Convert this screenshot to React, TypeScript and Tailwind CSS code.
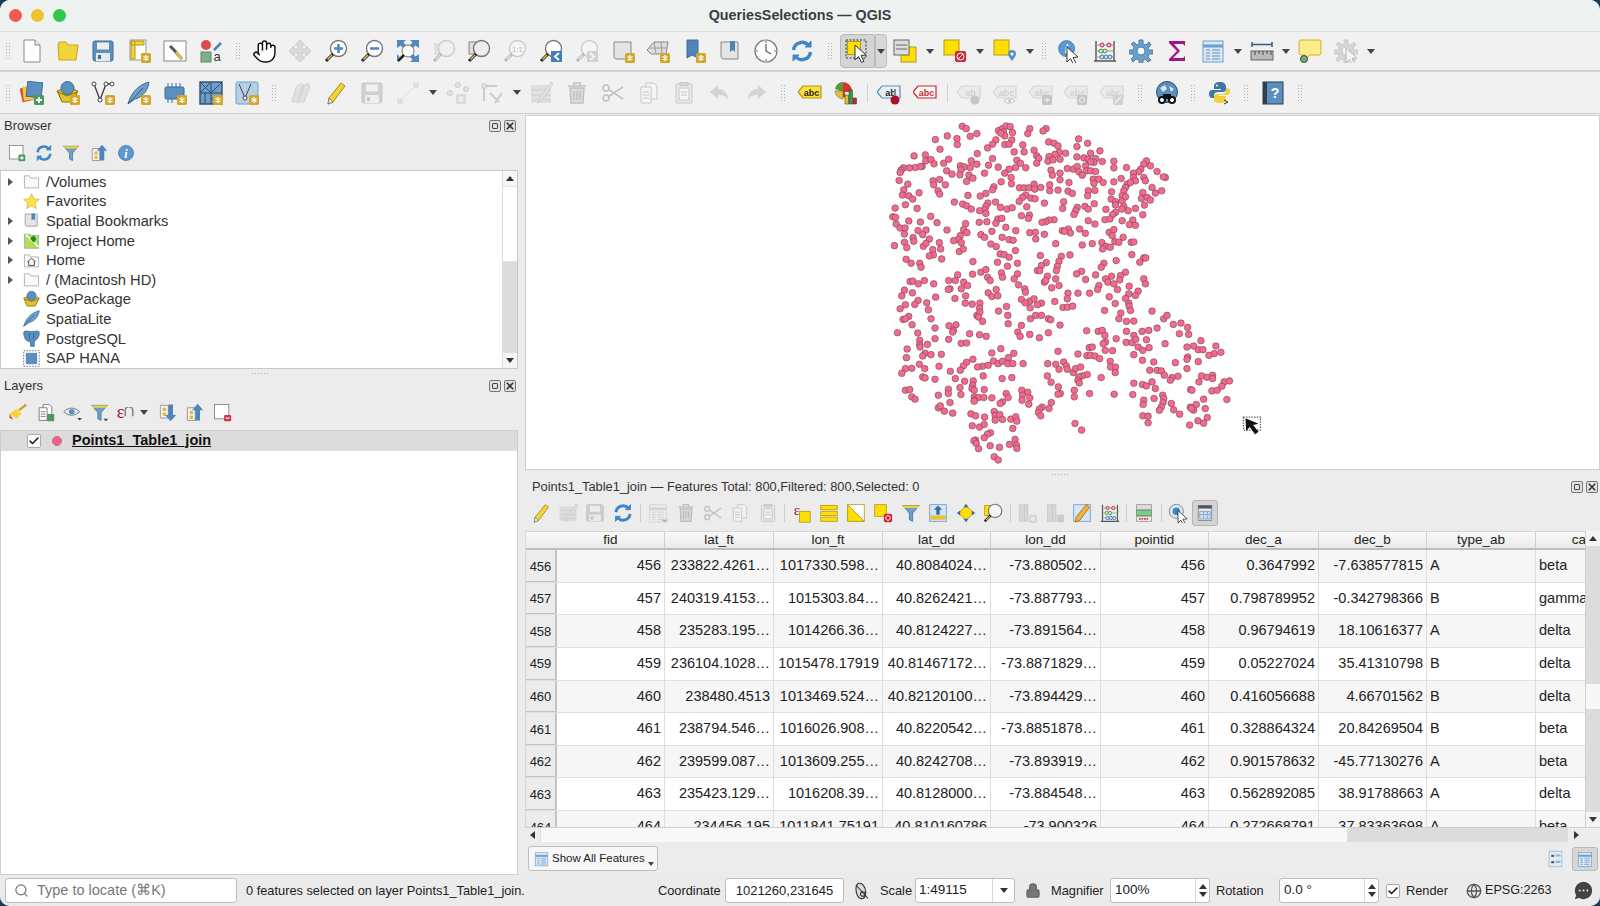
import type { ReactNode } from 'react';
import { Hand, Search, Lock, Globe, MessageCircleMore, Check } from 'lucide-react';

const POINTS =
  '309,31 321,38 264,60 353,53 333,61 228,71 293,68 418,44 430,38 441,30 453,32 433,47 460,50 437,60 425,52 512,38 506,53 561,38 552,45 ' +
  '294,86 242,100 410,72 400,85 385,96 437,86 458,72 450,85 569,78 585,82 597,90 659,69 654,92 686,82 491,87 ' +
  '723,105 695,112 495,108 465,108 525,103 533,120 539,127 533,142 601,109 620,112 588,115 570,122 567,136 582,132 603,130 654,123 675,126 688,130 710,128 705,140 695,138 730,137 765,136 863,135 164,120 198,117 199,135 215,131 224,144 253,142 268,130 354,113 400,128 336,135 473,133 ' +
  '484,142 500,156 469,155 450,160 437,172 417,154 376,172 353,145 388,148 303,150 315,153 333,155 305,162 262,165 278,175 302,177 329,178 188,152 183,152 167,155 150,156 132,156 125,163 122,170 765,156 803,155 855,145 875,150 846,160 840,168 824,172 895,167 576,163 603,172 625,158 643,160 655,152 660,168 680,150 683,165 695,165 710,167 670,178 580,178 ' +
  '341,187 322,197 119,194 145,205 221,195 241,191 258,207 223,207 456,185 457,204 426,198 404,213 703,190 720,190 733,200 705,203 765,198 787,188 824,185 830,195 855,185 860,195 920,185 914,183 805,205 800,215 815,200 630,200 603,192 572,207 481,216 495,216 509,216 525,205 527,220 545,215 572,225 597,223 ' +
  '133,222 129,238 148,240 160,250 179,231 236,225 241,235 326,239 363,241 380,233 400,222 627,226 640,233 708,224 688,225 686,240 758,228 880,215 909,225 890,232 852,230 848,248 865,245 875,253 795,225 790,240 757,250 770,258 790,255 800,243 500,238 490,245 515,247 528,249 480,257 556,262 614,258 ' +
  '285,259 310,265 322,270 336,280 386,262 380,272 376,282 361,285 409,259 424,275 444,280 459,276 503,273 611,278 138,267 107,277 173,278 706,264 678,272 655,275 650,285 645,296 688,280 741,281 795,272 808,285 830,278 857,268 770,268 789,280 770,290 761,297 852,297 ' +
  '100,303 108,305 148,316 183,319 214,302 233,321 380,293 360,320 383,318 416,310 428,308 440,335 410,323 487,300 511,298 508,308 585,312 570,313 560,318 549,320 688,315 708,325 738,312 753,310 790,315 822,313 830,329 812,327 110,325 122,337 137,337 319,324 ' +
  '176,345 200,343 190,357 135,355 161,366 263,343 313,342 323,351 303,360 297,372 283,375 365,357 376,365 398,347 429,365 470,345 512,351 529,350 556,356 530,370 610,345 628,340 634,352 617,347 662,340 679,353 751,350 765,342 760,360 793,365 210,370 163,377 135,380 450,372 462,374 ' +
  '105,390 142,396 192,392 200,383 240,381 244,400 395,385 411,393 590,384 670,388 700,384 729,381 741,392 731,400 754,395 768,378 780,380 817,380 825,379 306,381 300,408 312,400 220,402 469,405 222,418 210,421 ' +
  '140,431 155,443 181,443 185,455 247,430 341,438 415,440 423,415 435,417 450,425 475,443 544,420 607,422 633,418 600,437 595,452 819,417 855,427 861,427 843,440 772,435 735,443 727,455 562,441 547,450 535,465 ' +
  '365,470 380,462 340,476 445,452 427,472 475,475 592,465 542,465 668,467 653,475 710,478 758,482 800,470 785,480 783,493 740,490 680,492 855,490 860,505 556,500 565,482 590,490 430,485 385,485 393,495 465,490 152,498 160,497 195,495 177,505 223,505 268,495 288,495 295,478 313,500 ' +
  '272,520 306,520 325,510 135,524 127,541 159,532 267,522 478,508 497,520 499,530 387,532 411,522 398,543 416,541 578,517 600,510 560,495 627,533 657,533 692,533 720,510 716,522 747,500 765,505 776,522 811,512 838,527 830,540 810,535 ' +
  '319,541 287,549 229,545 176,555 166,567 202,562 138,568 122,580 625,550 512,557 487,552 498,562 525,550 547,563 535,568 513,577 318,563 339,566 362,563 361,578 587,558 751,544 769,564 800,549 810,563 811,572 815,585 612,576 626,575 641,572 737,585 880,587 ' +
  '418,587 442,573 207,583 215,610 148,603 131,612 138,610 446,600 353,600 362,590 358,605 514,610 530,600 547,600 568,610 575,613 786,593 780,610 803,618 825,617 915,610 925,600 895,638 370,618 944,627 967,623 987,636 ' +
  '158,628 227,638 269,631 290,628 282,645 280,650 114,652 175,653 447,625 487,630 476,650 603,629 683,646 718,648 730,645 738,660 803,648 825,660 850,648 870,645 962,655 990,657 ' +
  '331,655 361,658 381,663 483,663 512,657 541,667 568,652 227,670 268,672 181,675 181,688 204,687 306,684 322,683 772,670 740,680 733,685 802,681 820,682 831,672 863,673 919,685 1027,676 1005,692 985,695 1072,692 1019,703 1033,703 143,701 182,695 ' +
  '425,700 398,713 691,697 700,695 739,705 761,706 838,695 852,705 871,697 597,708 657,716 684,721 695,720 708,722 722,730 1087,711 1067,715 1051,720 197,714 215,718 246,717 141,727 190,722 464,714 448,727 825,718 987,725 985,732 851,735 885,740 1019,739 754,738 ' +
  '341,732 322,741 312,752 303,765 273,768 180,747 138,760 157,759 127,774 196,760 239,753 370,753 387,750 403,737 417,745 430,738 446,745 461,745 492,745 355,755 566,745 590,747 600,762 614,740 622,752 625,762 643,772 650,760 665,755 755,755 770,755 769,772 950,742 985,760 873,765 895,765 908,767 917,780 685,778 670,782 660,785 657,795 1029,782 1062,780 ' +
  '190,785 197,788 227,792 372,782 429,790 458,787 288,790 316,798 342,797 340,810 565,782 576,801 661,803 727,787 958,783 940,787 935,795 1045,786 1062,790 1097,800 1113,797 1090,813 1021,800 825,804 851,808 863,812 880,800 890,820 ' +
  '138,825 151,823 237,840 267,822 267,835 302,817 305,838 338,820 345,825 375,823 398,848 345,845 358,847 374,847 441,835 447,847 488,825 506,831 490,840 512,848 598,815 604,835 597,837 646,825 646,845 692,835 766,837 822,838 912,840 915,850 886,850 996,823 1000,825 1060,827 1076,825 1105,853 1035,852 ' +
  '157,845 167,852 272,862 237,878 243,872 255,888 280,894 345,855 345,858 489,855 430,860 423,865 509,867 577,862 570,880 549,876 541,882 538,892 855,855 853,868 913,862 908,875 902,885 938,865 945,884 963,897 1013,868 995,876 1005,885 1040,880 998,880 852,902 868,903 ' +
  '335,896 349,902 376,906 405,889 408,901 422,898 408,915 430,913 455,912 470,905 473,918 545,902 648,925 668,945 868,923 993,930 1018,917 1035,924 1046,907 339,932 361,936 375,928 461,940 394,953 385,957 375,968 349,975 344,977 351,985 393,992 421,997 358,1001 451,988 468,973 472,990 473,1000 405,1025 417,1035';

const ROWS = [
  ['456', '233822.4261…', '1017330.598…', '40.8084024…', '-73.880502…', '456', '0.3647992', '-7.638577815', 'A', 'beta'],
  ['457', '240319.4153…', '1015303.84…', '40.8262421…', '-73.887793…', '457', '0.798789952', '-0.342798366', 'B', 'gamma'],
  ['458', '235283.195…', '1014266.36…', '40.8124227…', '-73.891564…', '458', '0.96794619', '18.10616377', 'A', 'delta'],
  ['459', '236104.1028…', '1015478.17919', '40.81467172…', '-73.8871829…', '459', '0.05227024', '35.41310798', 'B', 'delta'],
  ['460', '238480.4513', '1013469.524…', '40.82120100…', '-73.894429…', '460', '0.416056688', '4.66701562', 'B', 'delta'],
  ['461', '238794.546…', '1016026.908…', '40.8220542…', '-73.8851878…', '461', '0.328864324', '20.84269504', 'B', 'beta'],
  ['462', '239599.087…', '1013609.255…', '40.8242708…', '-73.893919…', '462', '0.901578632', '-45.77130276', 'A', 'beta'],
  ['463', '235423.129…', '1016208.39…', '40.8128000…', '-73.884548…', '463', '0.562892085', '38.91788663', 'A', 'delta'],
  ['464', '234456.195', '1011841.75191', '40.810160786', '-73.900326', '464', '0.272668791', '37.83363698', 'A', 'beta'],
];

const HEADERS = ['fid', 'lat_ft', 'lon_ft', 'lat_dd', 'lon_dd', 'pointid', 'dec_a', 'dec_b', 'type_ab', 'ca'];
const COLS = 'grid grid-cols-[31px_108px_109px_109px_108px_110px_108px_110px_108px_109px_50px]';

// ---- small building blocks for the toolbars ----

function Ico({ children, dim, s = 'w-6 h-6' }: { children: ReactNode; dim?: boolean; s?: string }) {
  return (
    <svg viewBox="0 0 24 24" className={`${s} shrink-0 ${dim ? 'opacity-30 grayscale' : ''}`}>
      {children}
    </svg>
  );
}

function Badge({ x = 14, y = 14 }: { x?: number; y?: number }) {
  return (
    <g>
      <rect x={x} y={y} width="10" height="10" rx="1.5" fill="#d4a62a" />
      <path d={`M${x + 5} ${y + 2}v6M${x + 2.4} ${y + 3.5}l5.2 3M${x + 2.4} ${y + 6.5}l5.2-3`} stroke="#fff" strokeWidth="1.2" />
    </g>
  );
}

function Lens({ glass = '#fff' }: { glass?: string }) {
  return (
    <g>
      <circle cx="14.5" cy="9.5" r="8" fill={glass} stroke="#777" strokeWidth="1.4" />
      <path d="M9 15L2 22" stroke="#222" strokeWidth="3" />
      <path d="M8 16L3.5 20.5" stroke="#e8c53a" strokeWidth="1.5" />
    </g>
  );
}

const Folder = () => <path d="M2 6l1-3h7l2 3h10l-2 15H3z" fill="#f2d43a" stroke="#c9a516" />;
const Floppy = () => (
  <g>
    <rect x="2" y="2" width="20" height="20" rx="2" fill="#5b8fbf" stroke="#3d6d99" />
    <rect x="6" y="3.5" width="12" height="7" fill="#eee" />
    <rect x="5" y="14" width="14" height="8" fill="#e8e8e8" />
    <rect x="7" y="16" width="3" height="4" fill="#3d6d99" />
  </g>
);
const Scroll = () => <path d="M3 3h17v17H6c-2 0-3-1-3-3z" fill="#e4e4e4" stroke="#888" />;
const Refresh = () => (
  <g fill="none" stroke="#3f86c6" strokeWidth="3.4">
    <path d="M3.5 11a8.5 8.5 0 0 1 15-4.5" />
    <path d="M20.5 13a8.5 8.5 0 0 1-15 4.5" />
    <path d="M21 2v6h-6z" fill="#3f86c6" strokeWidth="1" />
    <path d="M3 22v-6h6z" fill="#3f86c6" strokeWidth="1" />
  </g>
);
const Funnel = () => (
  <g>
    <path d="M2 3h20l-8 9v10l-4-2v-8z" fill="#6d9fcb" stroke="#3f6f9c" />
    <path d="M2 3h20l-2 3H4z" fill="#f2d43a" />
  </g>
);
const Pencil = () => (
  <g>
    <path d="M17 2l4 3L9 21l-5 2 1-6z" fill="#f2d43a" stroke="#a98a12" />
    <path d="M4 23l1-6 4 4z" fill="#eee" stroke="#555" strokeWidth=".6" />
  </g>
);
const Bin = () => (
  <g fill="none" stroke="#7a4a3a" strokeWidth="1.5">
    <path d="M5 7h14l-1 15H6z" fill="#c9a99a" />
    <path d="M3 5h18M9 5V2h6v3M9 10v9M12 10v9M15 10v9" />
  </g>
);
const Scissors = () => (
  <g fill="none" stroke="#555" strokeWidth="1.5">
    <circle cx="5" cy="7" r="3" />
    <circle cx="5" cy="17" r="3" />
    <path d="M7.5 8.5L22 18M7.5 15.5L22 6" />
  </g>
);
const Pages = () => (
  <g fill="#fff" stroke="#666">
    <path d="M9 2h8l3 3v13H9z" />
    <path d="M4 6h10v16H4z" />
    <path d="M6 11h6M6 14h6M6 17h6" />
  </g>
);
const Paste = () => (
  <g stroke="#666">
    <rect x="4" y="3" width="16" height="19" rx="1" fill="#ddd" />
    <rect x="7" y="7" width="10" height="12" fill="#fff" />
    <rect x="8" y="1.5" width="8" height="3" fill="#999" />
    <path d="M9 11h6M9 14h6" />
  </g>
);
const Yellow = ({ x = 3, y = 3, w = 16, h = 16 }: { x?: number; y?: number; w?: number; h?: number }) => (
  <rect x={x} y={y} width={w} height={h} fill="#ffdf00" stroke="#b29a1c" />
);
const InfoDot = () => (
  <g>
    <circle cx="12" cy="12" r="10" fill="#5b9ad0" stroke="#3d75a8" />
    <text x="12" y="18" textAnchor="middle" fontSize="16" fontWeight="700" fontStyle="italic" fontFamily="Liberation Serif" fill="#fff">i</text>
  </g>
);
const Cursor = ({ x = 10, y = 10 }: { x?: number; y?: number }) => (
  <path d={`M${x} ${y}v15l3.500-3.500 3 6 2.500-1.300-3-5.700 5-.5z`} fill="#fff" stroke="#222" strokeWidth=".9" />
);
const Arrows = ({ c = '#4f8ac0' }: { c?: string }) => (
  <g fill={c}>
    <path d="M1 1h9L7.5 3.5l3 3-3 3-3-3L1 9z" />
    <path d="M23 1v8l-3.500-2.500-3 3-3-3 3-3L14 1z" />
    <path d="M23 23h-9l2.500-2.500-3-3 3-3 3 3L23 15z" />
  </g>
);
const Abacus = () => (
  <g fill="none">
    <path d="M3 2v20M21 2v20M1 22h22" stroke="#555" strokeWidth="1.4" />
    <path d="M3 6h18M3 12h18M3 18h18" stroke="#999" />
    <g stroke="#c2274a" fill="#f5c2cc"><circle cx="9" cy="6" r="2" /><circle cx="16" cy="6" r="2" /></g>
    <g stroke="#4a9a4a" fill="#c9ecc9"><circle cx="8" cy="12" r="2" /><circle cx="12" cy="12" r="2" /></g>
    <g stroke="#3f77b0" fill="#cfe0f2"><circle cx="9" cy="18" r="2" /><circle cx="13" cy="18" r="2" /><circle cx="17" cy="18" r="2" /></g>
  </g>
);
const Table = () => (
  <g>
    <rect x="2" y="2" width="20" height="21" fill="#dbe8f5" stroke="#6d9fcb" />
    <path d="M2 7h20" stroke="#6d9fcb" strokeWidth="3" />
    <path d="M5 11h4M11 11h8M5 14h4M11 14h8M5 17h4M11 17h8M5 20h4M11 20h8" stroke="#5f8fbd" />
  </g>
);
const Gear = () => (
  <g fill="#6d9fcb" stroke="#4f80ad">
    <path d="M10 1h4v4l3 1 3-3 2 3-3 3 1 2h4v4h-4l-1 3 3 3-3 2-3-3-2 1v4h-4v-4l-3-1-3 3-2-3 3-3-1-2H0v-4h4l1-3-3-3 3-2 3 3 2-1z" />
    <circle cx="12" cy="12" r="4" fill="#fff" />
  </g>
);
const Abc = ({ fill, stroke, text, label = 'abc' }: { fill: string; stroke: string; text: string; label?: string }) => (
  <g>
    <path d="M0 11l5-6h18v12H5z" fill={fill} stroke={stroke} strokeWidth="1.2" />
    <text x="13.500" y="14.500" textAnchor="middle" fontSize="9" fontWeight="700" fontFamily="Liberation Sans" fill={text}>{label}</text>
  </g>
);

function Slot({ children, w = 'w-[35.8px]' }: { children: ReactNode; w?: string }) {
  return <div className={`${w} h-full flex items-center justify-center shrink-0`}>{children}</div>;
}

function Slot27({ children }: { children: ReactNode }) {
  return <div className="w-[27.4px] h-full flex items-center justify-center shrink-0">{children}</div>;
}

function Caret({ w = 'w-[14px]' }: { w?: string }) {
  return (
    <div className={`${w} h-full flex items-center justify-center shrink-0`}>
      <div className="w-0 h-0 border-x-[4px] border-x-transparent border-t-[5px] border-t-[#444]" />
    </div>
  );
}

function Grip({ w }: { w: string }) {
  return (
    <div className={`${w} h-full flex items-center justify-center shrink-0`}>
      <div className="w-[6px] h-[18px] bg-[radial-gradient(#b0b0b0_0.8px,transparent_1px)] bg-[length:3px_3px]" />
    </div>
  );
}

const Sep = ({ w }: { w: string }) => (
  <div className={`${w} h-full flex items-center justify-center shrink-0`}>
    <div className="w-px h-[18px] bg-[#cfcfcf]" />
  </div>
);

function Toolbar1() {
  return (
    <div className="h-[41px] flex items-center pl-[14px] border-t border-[#dcdcdc] border-b-2 border-b-[#d2d2d2] bg-[#f1f1f1] relative">
      <div className="absolute left-[4px] top-0 h-full"><Grip w="w-[8px]" /></div>
      <Slot><Ico><path d="M4 1h11l5 5v17H4z" fill="#fff" stroke="#888" /><path d="M15 1v5h5" fill="#eee" stroke="#888" /></Ico></Slot>
      <Slot><Ico><Folder /></Ico></Slot>
      <Slot><Ico><Floppy /></Ico></Slot>
      <Slot><Ico><rect x="3" y="1" width="16" height="20" fill="#fff" stroke="#999" /><path d="M4 2h4v18H4zM4 2h13v4H4z" fill="#f2d43a" stroke="#b29a1c" /><Badge /></Ico></Slot>
      <Slot><Ico><rect x="1" y="2" width="22" height="20" fill="#fff" stroke="#888" /><path d="M7 7l4 4 8 9" stroke="#555" strokeWidth="3" /><path d="M13 13l6 7" stroke="#e8c53a" strokeWidth="2.500" /></Ico></Slot>
      <Slot><Ico><circle cx="7" cy="6" r="5" fill="#df4a4a" /><path d="M15 11l7-7" stroke="#4f80ad" strokeWidth="2.500" /><rect x="2" y="13" width="10" height="10" fill="#7fae8a" stroke="#5a8a66" /><text x="18" y="22" textAnchor="middle" fontSize="13" fontFamily="Liberation Sans" fill="#333">a</text></Ico></Slot>
      <Grip w="w-[18px]" />
      <Slot><Hand className="w-[25px] h-[25px]" fill="#fff" stroke="#111" strokeWidth={1.4} /></Slot>
      <Slot><Ico dim><path d="M12 1l5 5h-3v4h4V7l5 5-5 5v-3h-4v4h3l-5 5-5-5h3v-4H6v3l-5-5 5-5v3h4V6H7z" fill="#aaa" stroke="#777" /></Ico></Slot>
      <Slot><Ico><Lens /><path d="M14.500 5v9M10 9.500h9" stroke="#4f8ac0" strokeWidth="2.600" /></Ico></Slot>
      <Slot><Ico><Lens /><path d="M10 9.500h9" stroke="#4f8ac0" strokeWidth="2.600" /></Ico></Slot>
      <Slot><Ico><Arrows /><path d="M1 23v-8l2.500 2.500" fill="#4f8ac0" /><circle cx="12" cy="12" r="6" fill="#fff" stroke="#777" /><path d="M8 16l-6 6" stroke="#222" strokeWidth="2.500" /></Ico></Slot>
      <Slot><Ico dim><rect x="2" y="4" width="12" height="12" fill="#bbb" /><Lens glass="#eee" /></Ico></Slot>
      <Slot><Ico><rect x="2" y="3" width="12" height="12" fill="#ddd" stroke="#888" /><Lens glass="#eeeeee" /></Ico></Slot>
      <Slot><Ico dim><Lens /><text x="14.500" y="13" textAnchor="middle" fontSize="8" fontFamily="Liberation Sans" fill="#333">1:1</text></Ico></Slot>
      <Slot><Ico><Lens /><rect x="12" y="12" width="11" height="11" fill="#3f7fb8" /><path d="M20 14l-4 3.500 4 3.500" stroke="#fff" strokeWidth="2" fill="none" /></Ico></Slot>
      <Slot><Ico dim><Lens /><rect x="12" y="12" width="11" height="11" fill="#888" /><path d="M15 14l4 3.500-4 3.500" stroke="#fff" strokeWidth="2" fill="none" /></Ico></Slot>
      <Slot><Ico><Scroll /><Badge /></Ico></Slot>
      <Slot><Ico><path d="M1 11L8 3h14l-2 12H5z" fill="#ddd" stroke="#888" /><path d="M8 3l2 12M15 3l1 12M3 9h18" stroke="#999" /><Badge /></Ico></Slot>
      <Slot><Ico><path d="M5 1h11v18l-6-3-5 3z" fill="#4f85b8" stroke="#3d6d99" /><Badge /></Ico></Slot>
      <Slot><Ico><Scroll /><path d="M12 2h5v11l-2.500-2-2.500 2z" fill="#4f85b8" /></Ico></Slot>
      <Slot><Ico><circle cx="12" cy="12" r="11" fill="#fff" stroke="#777" strokeWidth="1.2" /><path d="M12 5v7l5 3" stroke="#555" strokeWidth="1.2" fill="none" /><path d="M12 2v2M22 12h-2M12 22v-2M2 12h2" stroke="#4f80ad" strokeWidth="1.2" /></Ico></Slot>
      <Slot><Ico><Refresh /></Ico></Slot>
      <Grip w="w-[20px]" />
      <div className="flex h-[34px] shrink-0">
        <div className="w-[35px] h-full rounded-l-[4px] rounded-r-[2px] bg-[#d4d4d4] border border-[#b9b9b9] flex items-center justify-center">
          <Ico>
            <rect x="1" y="1" width="20" height="18" fill="none" stroke="#333" strokeDasharray="2 1.500" />
            <Yellow x={2.500} y={2.500} w={13} h={13} />
            <Cursor x={10} y={6} />
          </Ico>
        </div>
        <div className="w-[12px] h-full rounded-r-[4px] bg-[#d8d8d8] border border-[#bcbcbc] flex items-center justify-center">
          <div className="w-0 h-0 border-x-[4px] border-x-transparent border-t-[5px] border-t-[#444]" />
        </div>
      </div>
      <Slot w="w-[36px]"><Ico><Yellow x={8} y={8} w={15} h={15} /><rect x="1" y="1" width="15" height="15" fill="#ddd" stroke="#666" /><path d="M3 6h11M3 10h11" stroke="#666" /></Ico></Slot><Caret />
      <Slot w="w-[36px]"><Ico><Yellow x={1} y={1} w={15} h={15} /><rect x="12" y="12" width="11" height="11" rx="2" fill="#c9263d" /><circle cx="17.500" cy="17.500" r="3.500" fill="none" stroke="#fff" /><path d="M15 20l5-5" stroke="#fff" /></Ico></Slot><Caret />
      <Slot w="w-[36px]"><Ico><Yellow x={1} y={1} w={15} h={15} /><path d="M19 22c-2-3-4-5-4-7a4 4 0 0 1 8 0c0 2-2 4-4 7z" fill="#5b8fbf" /><circle cx="19" cy="15" r="1.500" fill="#fff" /></Ico></Slot><Caret />
      <Grip w="w-[15px]" />
      <Slot><Ico><g transform="scale(.8)"><InfoDot /></g><Cursor x={10} y={8} /></Ico></Slot>
      <Slot><Ico><Abacus /></Ico></Slot>
      <Slot><Ico><Gear /></Ico></Slot>
      <Slot><Ico><path d="M4 2h16v5l-2-2H9l6 7-7 7h10l2-2v5H4v-2l8-8-8-8z" fill="#a3148c" /></Ico></Slot>
      <Slot w="w-[36px]"><Ico><Table /></Ico></Slot><Caret />
      <Slot w="w-[34px]"><Ico><path d="M2 3v5M22 3v5M2 5.500h20" stroke="#2f5d86" strokeWidth="1.500" /><rect x="1" y="12" width="22" height="9" fill="#bbb" stroke="#666" /><path d="M5 12v4M9 12v3M13 12v4M17 12v3M21 12v4" stroke="#444" /></Ico></Slot><Caret />
      <Slot w="w-[35px]"><Ico><path d="M3 1h18a2 2 0 0 1 2 2v11a2 2 0 0 1-2 2H12l-5 4v-4H3a2 2 0 0 1-2-2V3a2 2 0 0 1 2-2z" fill="#fdeb8c" stroke="#d8ae2c" /><circle cx="6" cy="20" r="3.500" fill="#6fae72" stroke="#444" /></Ico></Slot>
      <Slot w="w-[36px]"><Ico dim><Gear /><Cursor x={12} y={9} /></Ico></Slot><Caret />
    </div>
  );
}

function Toolbar2() {
  return (
    <div className="h-[42px] flex items-center pl-[14px] border-b border-[#cfcfcf] bg-[#f1f1f1] relative">
      <div className="absolute left-[4px] top-0 h-full"><Grip w="w-[8px]" /></div>
      <Slot><Ico><rect x="1" y="6" width="14" height="14" fill="#d84a3c" transform="rotate(-12 8 13)" /><rect x="3" y="5" width="14" height="14" fill="#f2c53a" transform="rotate(-6 10 12)" /><rect x="7" y="1" width="15" height="15" fill="#5b8fbf" stroke="#3d6d99" transform="rotate(6 14 8)" /><rect x="14" y="14" width="10" height="10" rx="1.500" fill="#4a9a5a" /><path d="M19 16v6M16 19h6" stroke="#fff" strokeWidth="1.800" /></Ico></Slot>
      <Slot><Ico><path d="M1 10l5 10h11l5-10-10-4z" fill="#e6c22c" stroke="#8a7410" /><circle cx="11.500" cy="7" r="6.500" fill="#5b8fbf" stroke="#3d6d99" /><path d="M2 11l9 4 10-4-4 10H6z" fill="#e6c22c" stroke="#8a7410" /><Badge /></Ico></Slot>
      <Slot><Ico><path d="M3 3l6 16 6-16h6" fill="none" stroke="#444" strokeWidth="1.400" /><circle cx="3" cy="3" r="2" fill="#fff" stroke="#444" /><circle cx="9" cy="19" r="2" fill="#fff" stroke="#444" /><circle cx="15" cy="3" r="2" fill="#fff" stroke="#444" /><circle cx="21" cy="3" r="2" fill="#fff" stroke="#444" /><Badge /></Ico></Slot>
      <Slot><Ico><path d="M1 23C4 12 11 4 22 1c-1 8-6 15-14 17z" fill="#6d9fcb" stroke="#3d6d99" /><path d="M1 23L16 7" stroke="#2f5d86" /><Badge /></Ico></Slot>
      <Slot><Ico><rect x="2" y="6" width="19" height="12" rx="1.500" fill="#5b8fbf" stroke="#3d6d99" /><path d="M5 2v4M9 2v4M13 2v4M17 2v4M5 18v4M9 18v4" stroke="#3d6d99" /><Badge /></Ico></Slot>
      <Slot><Ico><rect x="1" y="1" width="22" height="22" fill="#6d9fcb" stroke="#2f4d6c" strokeWidth="1.400" /><path d="M1 12h22M12 1v22M1 1l11 11M12 1L1 12M12 12L23 1M12 18h11M6 12v11" stroke="#2f4d6c" /><Badge /></Ico></Slot>
      <Slot><Ico><rect x="1" y="1" width="22" height="22" rx="1.500" fill="#b5cfe6" stroke="#6d9fcb" /><path d="M4 3l6 14 6-14" fill="none" stroke="#444" /><circle cx="10" cy="17" r="2" fill="#fff" stroke="#444" /><Badge /></Ico></Slot>
      <Grip w="w-[18px]" />
      <Slot><Ico dim><path d="M4 21L8 6l6-4 2 4-6 15zM10 21l4-15 6-4 2 4-6 15z" fill="#bbb" stroke="#888" /></Ico></Slot>
      <Slot><Ico><Pencil /></Ico></Slot>
      <Slot><Ico dim><Floppy /></Ico></Slot>
      <Slot><Ico dim><path d="M4 20L20 4" stroke="#888" strokeDasharray="2 2" /><rect x="2" y="18" width="4" height="4" fill="#ccc" stroke="#888" /><rect x="18" y="2" width="4" height="4" fill="#ccc" stroke="#888" /></Ico></Slot><Caret />
      <Slot><Ico dim><circle cx="12" cy="4" r="2.500" fill="#bbb" stroke="#777" /><circle cx="20" cy="8" r="2.500" fill="#bbb" stroke="#777" /><circle cx="4" cy="12" r="2.500" fill="#bbb" stroke="#777" /><Badge x={10} y={13} /></Ico></Slot>
      <Slot><Ico dim><path d="M2 5h14M3 5v15M14 22l7-10M9 12l9 9" stroke="#777" strokeWidth="2" /><rect x="1" y="3" width="4" height="4" fill="#ccc" stroke="#777" /></Ico></Slot><Caret w="w-[12px]" />
      <Slot><Ico dim><rect x="2" y="4" width="20" height="18" fill="#bba" /><path d="M2 9h20M2 14h20M2 19h20" stroke="#887" /><path d="M22 1L11 17l-2 5 4-3L24 3z" fill="#ccc" stroke="#777" /></Ico></Slot>
      <Slot><Ico dim><Bin /></Ico></Slot>
      <Slot><Ico dim><Scissors /></Ico></Slot>
      <Slot><Ico dim><Pages /></Ico></Slot>
      <Slot><Ico dim><Paste /></Ico></Slot>
      <Slot><Ico dim><path d="M10 4L2 11l8 7v-4c5 0 8 1 10 5 0-7-4-11-10-11z" fill="#a98a7a" /></Ico></Slot>
      <Slot><Ico dim><path d="M14 4l8 7-8 7v-4c-5 0-8 1-10 5 0-7 4-11 10-11z" fill="#a98a7a" /></Ico></Slot>
      <Grip w="w-[18px]" />
      <Slot><Ico><Abc fill="#ffdf3a" stroke="#b29a1c" text="#222" /></Ico></Slot>
      <Slot><Ico><path d="M9 1a9 9 0 0 1 9 9v1h-7v6a9 9 0 0 1-2-16z" fill="#d8362d" /><path d="M1 8a8 8 0 0 1 8-7v10z" fill="#5a9a3a" /><path d="M1 10a8.500 8.500 0 0 0 8 8V10z" fill="#e8c22c" stroke="#555" strokeWidth=".5" /><rect x="11" y="14" width="3.500" height="9" fill="#e8c22c" stroke="#333" strokeWidth=".5" /><rect x="15" y="9" width="3.500" height="14" fill="#3a9a3a" stroke="#333" strokeWidth=".5" /><rect x="19" y="17" width="3.500" height="6" fill="#c9262d" stroke="#333" strokeWidth=".5" /></Ico></Slot>
      <Sep w="w-[8px]" />
      <Slot><Ico><Abc fill="#e6eef6" stroke="#5b8fbf" text="#222" label="ab" /><circle cx="18" cy="19" r="4.500" fill="#a8122d" /><path d="M18 15V8" stroke="#888" strokeWidth="2" /></Ico></Slot>
      <Slot><Ico><Abc fill="#fff" stroke="#cf1f2d" text="#cf1f2d" /></Ico></Slot>
      <Sep w="w-[8px]" />
      <Slot><Ico dim><Abc fill="#ddd" stroke="#999" text="#888" label="ab" /><circle cx="18" cy="19" r="4.500" fill="#666" /></Ico></Slot>
      <Slot><Ico dim><Abc fill="#ddd" stroke="#999" text="#888" /><path d="M11 20c2-3 8-3 11 0-3 3-9 3-11 0z" fill="#fff" stroke="#666" /><circle cx="16.500" cy="20" r="1.500" fill="#666" /></Ico></Slot>
      <Slot><Ico dim><Abc fill="#ddd" stroke="#999" text="#888" /><rect x="13" y="14" width="10" height="10" rx="1.500" fill="#666" /><path d="M15 19h4m-2-2.500l3 2.500-3 2.500" stroke="#fff" fill="none" /></Ico></Slot>
      <Slot><Ico dim><Abc fill="#ddd" stroke="#999" text="#888" /><rect x="13" y="14" width="10" height="10" rx="1.500" fill="#666" /><circle cx="18" cy="19" r="2.500" fill="none" stroke="#fff" /></Ico></Slot>
      <Slot><Ico dim><Abc fill="#ddd" stroke="#999" text="#888" /><rect x="13" y="14" width="10" height="10" rx="1.500" fill="#888" /><path d="M15 22l6-6" stroke="#fff" strokeWidth="1.500" /></Ico></Slot>
      <Grip w="w-[19px]" />
      <Slot><Ico><circle cx="12" cy="11" r="10.500" fill="#5b8fbf" stroke="#2f4d6c" /><path d="M5 7l5-3 2 4-4 3zM14 5l5 3-3 3z" fill="#dbe6f0" /><circle cx="7" cy="19" r="4" fill="#111" /><circle cx="17" cy="19" r="4" fill="#111" /><circle cx="7" cy="19" r="2" fill="#fff" /><circle cx="17" cy="19" r="2" fill="#fff" /><path d="M8 13h8v5H8z" fill="#111" /></Ico></Slot>
      <Grip w="w-[17px]" />
      <Slot><Ico><path d="M12 1c-5 0-6 2-6 5v2h7v1H4c-2 0-3 2-3 4s1 4 3 4h2v-3c0-2 2-3 4-3h5c2 0 3-1 3-3V6c0-3-2-5-6-5z" fill="#3f78a8" /><circle cx="9" cy="4.500" r="1" fill="#fff" /><path d="M12 22c4 0 6-2 6-5v-2h-7v-1h8c2 0 3-2 3-4s-1-3-3-3h-1v3c0 2-2 3-4 3H9c-2 0-3 1-3 3v2c0 3 2 4 6 4z" fill="#f5cd3a" /><path d="M16 19l4 2-4 2" stroke="#333" fill="none" /></Ico></Slot>
      <Grip w="w-[17px]" />
      <Slot><Ico><rect x="2" y="1" width="20" height="22" fill="#5b8fbf" stroke="#2f3f4f" /><rect x="2" y="1" width="4" height="22" fill="#2f3f4f" /><text x="14" y="17" textAnchor="middle" fontSize="14" fontWeight="700" fontFamily="Liberation Sans" fill="#fff">?</text></Ico></Slot>
      <Grip w="w-[19px]" />
    </div>
  );
}

function DockButtons() {
  return (
    <div className="flex gap-[3px]">
      <div className="w-[12px] h-[12px] rounded-[2px] border border-[#777] bg-[#e2e2e2] flex items-center justify-center">
        <div className="w-[6px] h-[6px] border border-[#444] rounded-[1px]" />
      </div>
      <div className="w-[12px] h-[12px] rounded-[2px] border border-[#777] bg-[#e2e2e2] flex items-center justify-center">
        <svg viewBox="0 0 10 10" className="w-[8px] h-[8px]"><path d="M1 1l8 8M9 1L1 9" stroke="#333" strokeWidth="2" /></svg>
      </div>
    </div>
  );
}

function Arrow({ dir }: { dir: 'up' | 'down' | 'left' | 'right' }) {
  const cls = {
    up: 'border-x-[4px] border-x-transparent border-b-[5px] border-b-[#333]',
    down: 'border-x-[4px] border-x-transparent border-t-[5px] border-t-[#333]',
    left: 'border-y-[4px] border-y-transparent border-r-[5px] border-r-[#333]',
    right: 'border-y-[4px] border-y-transparent border-l-[5px] border-l-[#333]',
  }[dir];
  return <div className={`w-0 h-0 ${cls}`} />;
}

const TreeArrow = () => <div className="w-0 h-0 border-y-[4.5px] border-y-transparent border-l-[5px] border-l-[#555]" />;
const PlainFolder = () => <path d="M2 4h7l2 3h11v14H2z" fill="#fafafa" stroke="#999" />;

const TREE: { label: string; arrow: boolean; icon: ReactNode }[] = [
  { label: '/Volumes', arrow: true, icon: <PlainFolder /> },
  { label: 'Favorites', arrow: false, icon: <path d="M12 1l3.300 7.300 7.700.8-5.700 5.200 1.600 7.700L12 18l-6.900 4 1.600-7.700L1 9.100l7.700-.8z" fill="#fde24a" stroke="#d8ae2c" /> },
  { label: 'Spatial Bookmarks', arrow: true, icon: <g><Scroll /><path d="M12 2h5v10l-2.500-2-2.500 2z" fill="#4f85b8" /></g> },
  { label: 'Project Home', arrow: true, icon: <g><path d="M2 3h7l3 2h10v18H2z" fill="#b9d957" stroke="#8aa" /><path d="M4 4l18 17" stroke="#fff" strokeWidth="2" /><path d="M10 9l5-4 4 5-4 5z" fill="#1a8a2a" /></g> },
  { label: 'Home', arrow: true, icon: <g><PlainFolder /><path d="M6 14l6-5 6 5M8 13v6h8v-6" fill="none" stroke="#444" strokeWidth="1.300" /></g> },
  { label: '/ (Macintosh HD)', arrow: true, icon: <PlainFolder /> },
  { label: 'GeoPackage', arrow: false, icon: <g><path d="M1 10l5 11h11l6-11-11-4z" fill="#e6c22c" stroke="#8a7410" /><circle cx="12" cy="7" r="6.500" fill="#5b8fbf" stroke="#3d6d99" /><path d="M2 11l10 4 10-4-5 10H6z" fill="#e6c22c" stroke="#8a7410" /></g> },
  { label: 'SpatiaLite', arrow: false, icon: <g><path d="M1 23C4 12 11 4 23 1c-1 8-6 15-15 17z" fill="#6d9fcb" stroke="#3d6d99" /><path d="M1 23L16 7" stroke="#2f5d86" /></g> },
  { label: 'PostgreSQL', arrow: false, icon: <g fill="#5b8fbf" stroke="#2f5d86"><path d="M1 4c0-3 5-3 7-2h8c2-1 7-1 7 2 0 5-2 8-3 8-1 3-3 3-4 3v8h-5l-1-7H8C4 16 1 10 1 4z" /><path d="M9 4v9M15 4v9" fill="none" /></g> },
  { label: 'SAP HANA', arrow: false, icon: <g><rect x="4" y="4" width="16" height="16" fill="#5b8fbf" /><rect x="1" y="1" width="22" height="22" fill="none" stroke="#333" strokeDasharray="2 2" /></g> },
];

function BrowserDock() {
  return (
    <>
      <div className="h-[24px] flex items-center justify-between pl-[4px] pr-[3px] text-[13px] text-[#333]">
        <span>Browser</span>
        <DockButtons />
      </div>
      <div className="h-[30px] flex items-center pl-[3px]">
        <Slot27><Ico s="w-[18px] h-[18px]"><rect x="2" y="2" width="18" height="18" fill="#fff" stroke="#777" /><rect x="14" y="14" width="9" height="9" rx="1.500" fill="#4a9a5a" /><path d="M18.500 16v5M16 18.500h5" stroke="#fff" strokeWidth="1.500" /></Ico></Slot27>
        <Slot27><Ico s="w-[18px] h-[18px]"><Refresh /></Ico></Slot27>
        <Slot27><Ico s="w-[18px] h-[18px]"><Funnel /></Ico></Slot27>
        <Slot27><Ico s="w-[18px] h-[18px]"><path d="M3 6h10v16H3z" fill="#f2f2f2" stroke="#888" /><rect x="6" y="10" width="4" height="4" fill="#e6b82c" /><rect x="6" y="16" width="4" height="4" fill="#e6b82c" /><path d="M16 1l7 8h-4v13h-6V9H9z" fill="#4f85b8" /></Ico></Slot27>
        <Slot27><Ico s="w-[18px] h-[18px]"><InfoDot /></Ico></Slot27>
      </div>
      <div className="mt-[2px] h-[199px] w-[518px] bg-white border border-[#c9c9c9] flex">
        <div className="flex-1 overflow-hidden pt-[1px]">
          {TREE.map((t) => (
            <div key={t.label} className="h-[19.600px] flex items-center text-[14.700px] text-[#333]">
              <div className="w-[21px] pl-[7px] shrink-0">{t.arrow && <TreeArrow />}</div>
              <div className="w-[18px] flex justify-center shrink-0"><Ico s="w-[17px] h-[17px]">{t.icon}</Ico></div>
              <span className="ml-[6px] whitespace-nowrap">{t.label}</span>
            </div>
          ))}
        </div>
        <div className="w-[15px] flex flex-col border-l border-[#dcdcdc] bg-[#f6f6f6]">
          <div className="h-[15px] flex items-center justify-center"><Arrow dir="up" /></div>
          <div className="h-[76px] bg-white border-y border-[#e2e2e2]" />
          <div className="flex-1 bg-[#dcdcdc]" />
          <div className="h-[15px] flex items-center justify-center"><Arrow dir="down" /></div>
        </div>
      </div>
    </>
  );
}

function LayersDock() {
  return (
    <div className="flex-1 flex flex-col min-h-0">
      <div className="h-[8px] flex items-center justify-center">
        <div className="w-[18px] h-[3px] bg-[radial-gradient(#b0b0b0_0.8px,transparent_1px)] bg-[length:3px_3px]" />
      </div>
      <div className="h-[18px] flex items-center justify-between pl-[4px] pr-[3px] text-[13px] text-[#333]">
        <span>Layers</span>
        <DockButtons />
      </div>
      <div className="h-[34px] flex items-center pl-[4px]">
        <Slot27><Ico s="w-[19px] h-[19px]"><path d="M14 9L23 2" stroke="#c9a516" strokeWidth="3" /><path d="M2 14l9-7 6 7-6 6z" fill="#f2d43a" /><path d="M2 14l5 7-5-2z" fill="#d84a3c" /></Ico></Slot27>
        <Slot27><Ico s="w-[19px] h-[19px]"><Pages /><rect x="14" y="14" width="9" height="9" rx="1.500" fill="#4a9a5a" /></Ico></Slot27>
        <Slot27><Ico s="w-[19px] h-[19px]"><path d="M1 11c5-6 14-6 20 0-6 6-15 6-20 0z" fill="#dde6ef" stroke="#666" /><circle cx="11" cy="11" r="3.500" fill="#5b8fbf" /><path d="M18 19l3 3 3-3z" fill="#444" /></Ico></Slot27>
        <Slot27><Ico s="w-[19px] h-[19px]"><Funnel /><path d="M17 20l3 3 3-3z" fill="#444" /></Ico></Slot27>
        <div className="w-[24px] h-full flex items-center justify-center shrink-0">
          <span className="font-['Liberation_Serif',serif] text-[18px] leading-none text-[#9a1030]">ε</span>
          <Ico s="w-[10px] h-[10px]"><path d="M3 22V8a9 9 0 0 1 18 0v14" fill="none" stroke="#888" strokeWidth="4" /></Ico>
        </div>
        <Caret w="w-[12px]" />
        <div className="w-[4px]" />
        <Slot27><Ico s="w-[19px] h-[19px]"><path d="M3 3h10v16H3z" fill="#f2f2f2" stroke="#888" /><rect x="6" y="6" width="4" height="4" fill="#e6b82c" /><rect x="6" y="12" width="4" height="4" fill="#e6b82c" /><path d="M16 23l7-8h-4V2h-6v13H9z" fill="#4f85b8" /></Ico></Slot27>
        <Slot27><Ico s="w-[19px] h-[19px]"><path d="M3 6h10v16H3z" fill="#f2f2f2" stroke="#888" /><rect x="6" y="10" width="4" height="4" fill="#e6b82c" /><rect x="6" y="16" width="4" height="4" fill="#e6b82c" /><path d="M16 1l7 8h-4v13h-6V9H9z" fill="#4f85b8" /></Ico></Slot27>
        <Slot27><Ico s="w-[19px] h-[19px]"><rect x="2" y="2" width="18" height="18" fill="#fff" stroke="#777" /><rect x="14" y="15" width="9" height="8" rx="1.500" fill="#d43545" /><path d="M16 19h5" stroke="#fff" strokeWidth="1.500" /></Ico></Slot27>
      </div>
      <div className="mt-[1px] flex-1 w-[518px] bg-white border border-[#cfcfcf]">
        <div className="h-[20px] bg-[#dcdcdc] flex items-center">
          <div className="ml-[26px] w-[14px] h-[14px] bg-white border border-[#aaa] rounded-[2px] flex items-center justify-center shrink-0">
            <Check className="w-3 h-3" stroke="#111" strokeWidth={3} />
          </div>
          <div className="ml-[11px] w-[10px] h-[10px] rounded-full bg-[#ee6385] border border-[#c86a82] shrink-0" />
          <span className="ml-[10px] text-[14.500px] font-bold underline text-[#111] whitespace-nowrap">Points1_Table1_join</span>
        </div>
      </div>
    </div>
  );
}

function MapCanvas() {
  const pts = POINTS.split(' ').map((p) => p.split(',').map(Number));
  return (
    <div className="ml-[6px] mt-px h-[355px] bg-white border border-[#cfcfcf] overflow-hidden">
      <svg viewBox="-999 0 3219 1062" className="w-full h-full block">
        {pts.map(([x, y], i) => (
          <circle key={i} cx={x} cy={y} r="10" fill="#f46a8c" stroke="#6e4552" strokeOpacity=".7" strokeWidth="2.500" />
        ))}
        <rect x="1155" y="906" width="51" height="39" fill="none" stroke="#555" strokeWidth="4" strokeDasharray="4 4" />
        <path d="M1161 909L1163 948 1174 936 1190 958 1200 950 1184 930 1200 926z" fill="#111" />
      </svg>
    </div>
  );
}

function AttrToolbar() {
  const s = 'w-5 h-5';
  return (
    <div className="h-[34px] flex items-center pl-[8px]">
      <Slot27><Ico s={s}><Pencil /></Ico></Slot27>
      <Slot27><Ico s={s} dim><rect x="2" y="4" width="20" height="18" fill="#bba" /><path d="M2 9h20M2 14h20M2 19h20" stroke="#887" /><path d="M22 1L11 17l-2 5 4-3L24 3z" fill="#ccc" stroke="#777" /></Ico></Slot27>
      <Slot27><Ico s={s} dim><Floppy /></Ico></Slot27>
      <Slot27><Ico s={s}><Refresh /></Ico></Slot27>
      <Sep w="w-[8px]" />
      <Slot27><Ico s={s} dim><Table /><path d="M16 20l4 3 4-3z" fill="#222" /></Ico></Slot27>
      <Slot27><Ico s={s} dim><Bin /></Ico></Slot27>
      <Slot27><Ico s={s} dim><Scissors /></Ico></Slot27>
      <Slot27><Ico s={s} dim><Pages /></Ico></Slot27>
      <Slot27><Ico s={s} dim><Paste /></Ico></Slot27>
      <Sep w="w-[6px]" />
      <Slot27><Ico s={s}><Yellow x={10} y={10} w={13} h={13} /><text x="7" y="14" textAnchor="middle" fontSize="18" fontFamily="Liberation Serif" fill="#9a1030">ε</text></Ico></Slot27>
      <Slot27><Ico s={s}><path d="M2 3h20v5H2zM2 10h20v5H2zM2 17h20v5H2z" fill="#ffdf00" stroke="#b29a1c" /></Ico></Slot27>
      <Slot27><Ico s={s}><path d="M2 2h20v20H2z" fill="#fff" stroke="#b29a1c" /><path d="M2 2l20 20H2z" fill="#ffdf00" stroke="#b29a1c" /></Ico></Slot27>
      <Slot27><Ico s={s}><Yellow x={2} y={2} w={14} h={14} /><rect x="13" y="13" width="10" height="10" rx="2" fill="#c9263d" /><circle cx="18" cy="18" r="2.800" fill="none" stroke="#fff" /></Ico></Slot27>
      <Slot27><Ico s={s}><Funnel /></Ico></Slot27>
      <Slot27><Ico s={s}><rect x="2" y="2" width="20" height="20" fill="#d5e4f2" stroke="#6d9fcb" /><rect x="3" y="15" width="18" height="5" fill="#e6c22c" /><path d="M12 3l5 5h-3v6h-4V8H7z" fill="#2f6da5" /></Ico></Slot27>
      <Slot27><Ico s={s}><path d="M12 3l9 9-9 9-9-9z" fill="#ffdf00" stroke="#b29a1c" /><path d="M12 1l3 4H9zM12 23l-3-4h6zM1 12l4-3v6zM23 12l-4 3V9z" fill="#2f6da5" /></Ico></Slot27>
      <Slot27><Ico s={s}><rect x="2" y="3" width="12" height="12" fill="#ffdf00" stroke="#b29a1c" /><Lens glass="#f5f5f5" /></Ico></Slot27>
      <Sep w="w-[7px]" />
      <Slot27><Ico s={s} dim><path d="M3 2h10v20H3zM9 2v20" fill="#aaa" stroke="#777" /><Badge /></Ico></Slot27>
      <Slot27><Ico s={s} dim><path d="M3 2h10v20H3zM9 2v20" fill="#aaa" stroke="#777" /><rect x="14" y="14" width="9" height="9" fill="#888" /></Ico></Slot27>
      <Slot27><Ico s={s}><rect x="2" y="2" width="20" height="20" fill="#d5e4f2" stroke="#6d9fcb" /><path d="M17 2l4 3L9 21l-5 2 1-6z" fill="#f2b43a" stroke="#a06a12" /></Ico></Slot27>
      <Slot27><Ico s={s}><Abacus /></Ico></Slot27>
      <Sep w="w-[7px]" />
      <Slot27><Ico s={s}><rect x="3" y="2" width="18" height="6" fill="#ddd" stroke="#999" /><rect x="3" y="9" width="18" height="6" fill="#7fc98a" stroke="#5a9a66" /><rect x="3" y="16" width="18" height="6" fill="#eee" stroke="#999" /><path d="M6 19h12" stroke="#d43545" strokeWidth="2" strokeDasharray="2 1" /></Ico></Slot27>
      <Sep w="w-[7px]" />
      <Slot27><Ico s={s}><circle cx="10" cy="10" r="8.500" fill="#dbe6f0" stroke="#777" /><circle cx="10" cy="10" r="4.500" fill="#3f86c6" /><Cursor x={12} y={9} /></Ico></Slot27>
      <div className="w-[26px] h-[26px] rounded-[3px] bg-[#d4d4d4] border border-[#b5b5b5] flex items-center justify-center shrink-0">
        <Ico s="w-[18px] h-[18px]"><rect x="3" y="2" width="18" height="20" fill="#e8e8e8" stroke="#777" /><rect x="3" y="2" width="18" height="4" fill="#555" /><path d="M5 10h14v10H5z" fill="#cfe0f2" stroke="#6d9fcb" /><path d="M5 14h14M10 10v10M15 10v10" stroke="#6d9fcb" /></Ico>
      </div>
    </div>
  );
}

function AttrTable() {
  return (
    <div className="h-[311px] shrink-0 mt-px ml-[6px] flex flex-col min-h-0">
      <div className="flex flex-1 min-h-0">
        <div className="w-[1060px] flex flex-col overflow-hidden bg-white border-t border-l border-[#d6d6d6]">
          <div className={`${COLS} h-[18px] shrink-0 bg-[linear-gradient(#f8f8f8,#ebebeb)] border-b-2 border-[#bdbdbd] text-[13.500px] leading-none text-[#222]`}>
            <div />
            {HEADERS.map((h) => (
              <div key={h} className="border-r border-[#cfcfcf] flex items-center justify-center whitespace-nowrap overflow-hidden last:justify-end last:border-r-0">{h}</div>
            ))}
          </div>
          {ROWS.map((r, i) => (
            <div key={r[0]} className={`${COLS} h-[32.650px] shrink-0 border-b border-[#dedede] text-[14.500px] text-[#222] ${i % 2 === 0 ? 'bg-[#f5f6f5]' : 'bg-white'}`}>
              <div className="bg-[#ececec] border-r-2 border-b border-[#c4c4c4] flex items-center justify-center text-[13px] pt-[2px]">{r[0]}</div>
              {r.map((c, j) => (
                <div key={j} className={`border-r border-[#dedede] flex items-center overflow-hidden whitespace-nowrap px-[3px] ${j < 8 ? 'justify-end' : 'justify-start'} last:border-r-0`}>{c}</div>
              ))}
            </div>
          ))}
        </div>
        <div className="w-[15px] flex flex-col bg-[#dcdcdc] border-l border-[#cfcfcf]">
          <div className="h-[15px] bg-[#f4f4f4] flex items-center justify-center shrink-0"><Arrow dir="up" /></div>
          <div className="h-[138px] shrink-0" />
          <div className="h-[25px] bg-[#f7f7f7] shrink-0" />
          <div className="flex-1" />
          <div className="h-[15px] bg-[#f4f4f4] flex items-center justify-center shrink-0"><Arrow dir="down" /></div>
        </div>
      </div>
      <div className="h-[15px] shrink-0 flex items-stretch bg-[#ededed] border-t border-[#cfcfcf]">
        <div className="w-[15px] flex items-center justify-center"><Arrow dir="left" /></div>
        <div className="w-[808px] bg-[#f8f8f8] border-x border-[#dedede]" />
        <div className="w-[220px] bg-[#dcdcdc]" />
        <div className="w-[17px] flex items-center justify-center"><Arrow dir="right" /></div>
      </div>
    </div>
  );
}

function AttrFooter() {
  return (
    <div className="flex-1 flex items-center justify-between pl-[9px] pr-[2px]">
      <div className="w-[130px] h-[25px] rounded-[3px] bg-[#f7f7f7] border border-[#bdbdbd] flex items-center pl-[5px] text-[11.500px] text-[#222] relative">
        <Ico s="w-[15px] h-[18px]"><Table /></Ico>
        <span className="ml-[3px] whitespace-nowrap">Show All Features</span>
        <div className="absolute right-[3px] bottom-[4px] w-0 h-0 border-x-[3px] border-x-transparent border-t-[4px] border-t-[#444]" />
      </div>
      <div className="flex items-center gap-[8px]">
        <Ico s="w-[17px] h-[20px]"><rect x="3" y="1" width="18" height="22" fill="#e0ecf7" stroke="#8fb3d4" /><rect x="6" y="6" width="4" height="3" fill="#555" /><rect x="6" y="15" width="4" height="3" fill="#555" /><path d="M12 7h7M12 16h7" stroke="#8fb3d4" strokeWidth="3" /></Ico>
        <div className="w-[26px] h-[24px] rounded-[3px] bg-[#d6d6d6] border border-[#b9b9b9] flex items-center justify-center">
          <Ico s="w-[16px] h-[20px]"><Table /></Ico>
        </div>
      </div>
    </div>
  );
}

function Spin() {
  return (
    <div className="w-[14px] h-full flex flex-col items-center justify-center gap-[3px] border-l border-[#d9d9d9]">
      <Arrow dir="up" />
      <Arrow dir="down" />
    </div>
  );
}

function StatusBar() {
  const box = 'h-[25px] rounded-[3px] bg-white border border-[#bdbdbd] flex items-center';
  return (
    <div className="h-[31px] shrink-0 flex items-center pl-[5px] bg-[#ebebeb] text-[12.800px] text-[#222] whitespace-nowrap">
      <div className={`${box} w-[232px] pl-[8px] text-[14.500px] text-[#777] shrink-0`}>
        <Search className="w-[15px] h-[15px] mr-[8px]" stroke="#777" />
        Type to locate (⌘K)
      </div>
      <span className="ml-[9px] w-[412px] shrink-0">0 features selected on layer Points1_Table1_join.</span>
      <span className="w-[67px] shrink-0">Coordinate</span>
      <div className={`${box} w-[119px] justify-center text-[13px] shrink-0`}>1021260,231645</div>
      <div className="w-[36px] flex justify-center shrink-0">
        <Ico s="w-[18px] h-[18px]"><path d="M7 2c5-2 10 5 10 12s-3 9-7 8-6-8-6-13c0-3 1-6 3-7z" fill="#ddd" stroke="#333" strokeWidth="1.500" /><circle cx="13" cy="16" r="3" fill="none" stroke="#333" strokeWidth="1.500" /><path d="M4 4l16 18" stroke="#333" strokeWidth="1.500" /></Ico>
      </div>
      <span className="w-[35px] shrink-0">Scale</span>
      <div className={`${box} w-[100px] pl-[3px] text-[13.500px] shrink-0`}>
        <span className="flex-1">1:49115</span>
        <div className="w-[22px] h-full border-l border-[#d9d9d9] flex items-center justify-center"><Arrow dir="down" /></div>
      </div>
      <div className="w-[36px] flex justify-center shrink-0"><Lock className="w-[16px] h-[21px]" fill="#777" stroke="#666" /></div>
      <span className="w-[59px] shrink-0">Magnifier</span>
      <div className={`${box} w-[100px] pl-[4px] text-[13.500px] shrink-0`}>
        <span className="flex-1">100%</span>
        <Spin />
      </div>
      <span className="ml-[6px] w-[63px] shrink-0">Rotation</span>
      <div className={`${box} w-[100px] pl-[4px] text-[13.500px] shrink-0`}>
        <span className="flex-1">0.0 °</span>
        <Spin />
      </div>
      <div className="ml-[7px] w-[14px] h-[14px] bg-white border border-[#aaa] rounded-[2px] flex items-center justify-center shrink-0">
        <Check className="w-3 h-3" stroke="#111" strokeWidth={3} />
      </div>
      <span className="ml-[6px] w-[60px] shrink-0">Render</span>
      <Globe className="w-[16px] h-[16px] shrink-0" stroke="#555" />
      <span className="ml-[3px] w-[87px] text-[12.600px] shrink-0">EPSG:2263</span>
      <MessageCircleMore className="w-[23px] h-[23px] shrink-0" fill="#444" stroke="#eee" />
    </div>
  );
}

export default function App() {
  return (
    <div className="w-[1600px] h-[906px] bg-[#1d3b53] font-['Liberation_Sans',sans-serif] overflow-hidden">
      <div className="w-full h-full flex flex-col rounded-[10px] overflow-hidden bg-[#ececec]">
        <div className="h-[31px] shrink-0 bg-[#eef3f1] flex items-center relative">
          <div className="absolute left-[9px] top-[9px] flex gap-[9px]">
            <div className="w-[13px] h-[13px] rounded-full bg-[#f25a50]" />
            <div className="w-[13px] h-[13px] rounded-full bg-[#eec22a]" />
            <div className="w-[13px] h-[13px] rounded-full bg-[#2fc84a]" />
          </div>
          <div className="w-full text-center text-[14.300px] font-bold text-[#3d3d3d]">QueriesSelections — QGIS</div>
        </div>
        <Toolbar1 />
        <Toolbar2 />
        <div className="flex-1 flex min-h-0">
          <div className="w-[519px] shrink-0 flex flex-col">
            <BrowserDock />
            <LayersDock />
          </div>
          <div className="flex-1 flex flex-col min-w-0">
            <MapCanvas />
            <div className="h-[8px] flex items-center justify-center">
              <div className="w-[18px] h-[3px] bg-[radial-gradient(#b0b0b0_0.8px,transparent_1px)] bg-[length:3px_3px]" />
            </div>
            <div className="h-[18px] flex items-center justify-between pl-[13px] pr-[2px] text-[12.850px] text-[#333]">
              <span>Points1_Table1_join — Features Total: 800,Filtered: 800,Selected: 0</span>
              <DockButtons />
            </div>
            <AttrToolbar />
            <AttrTable />
            <AttrFooter />
          </div>
        </div>
        <StatusBar />
      </div>
    </div>
  );
}
